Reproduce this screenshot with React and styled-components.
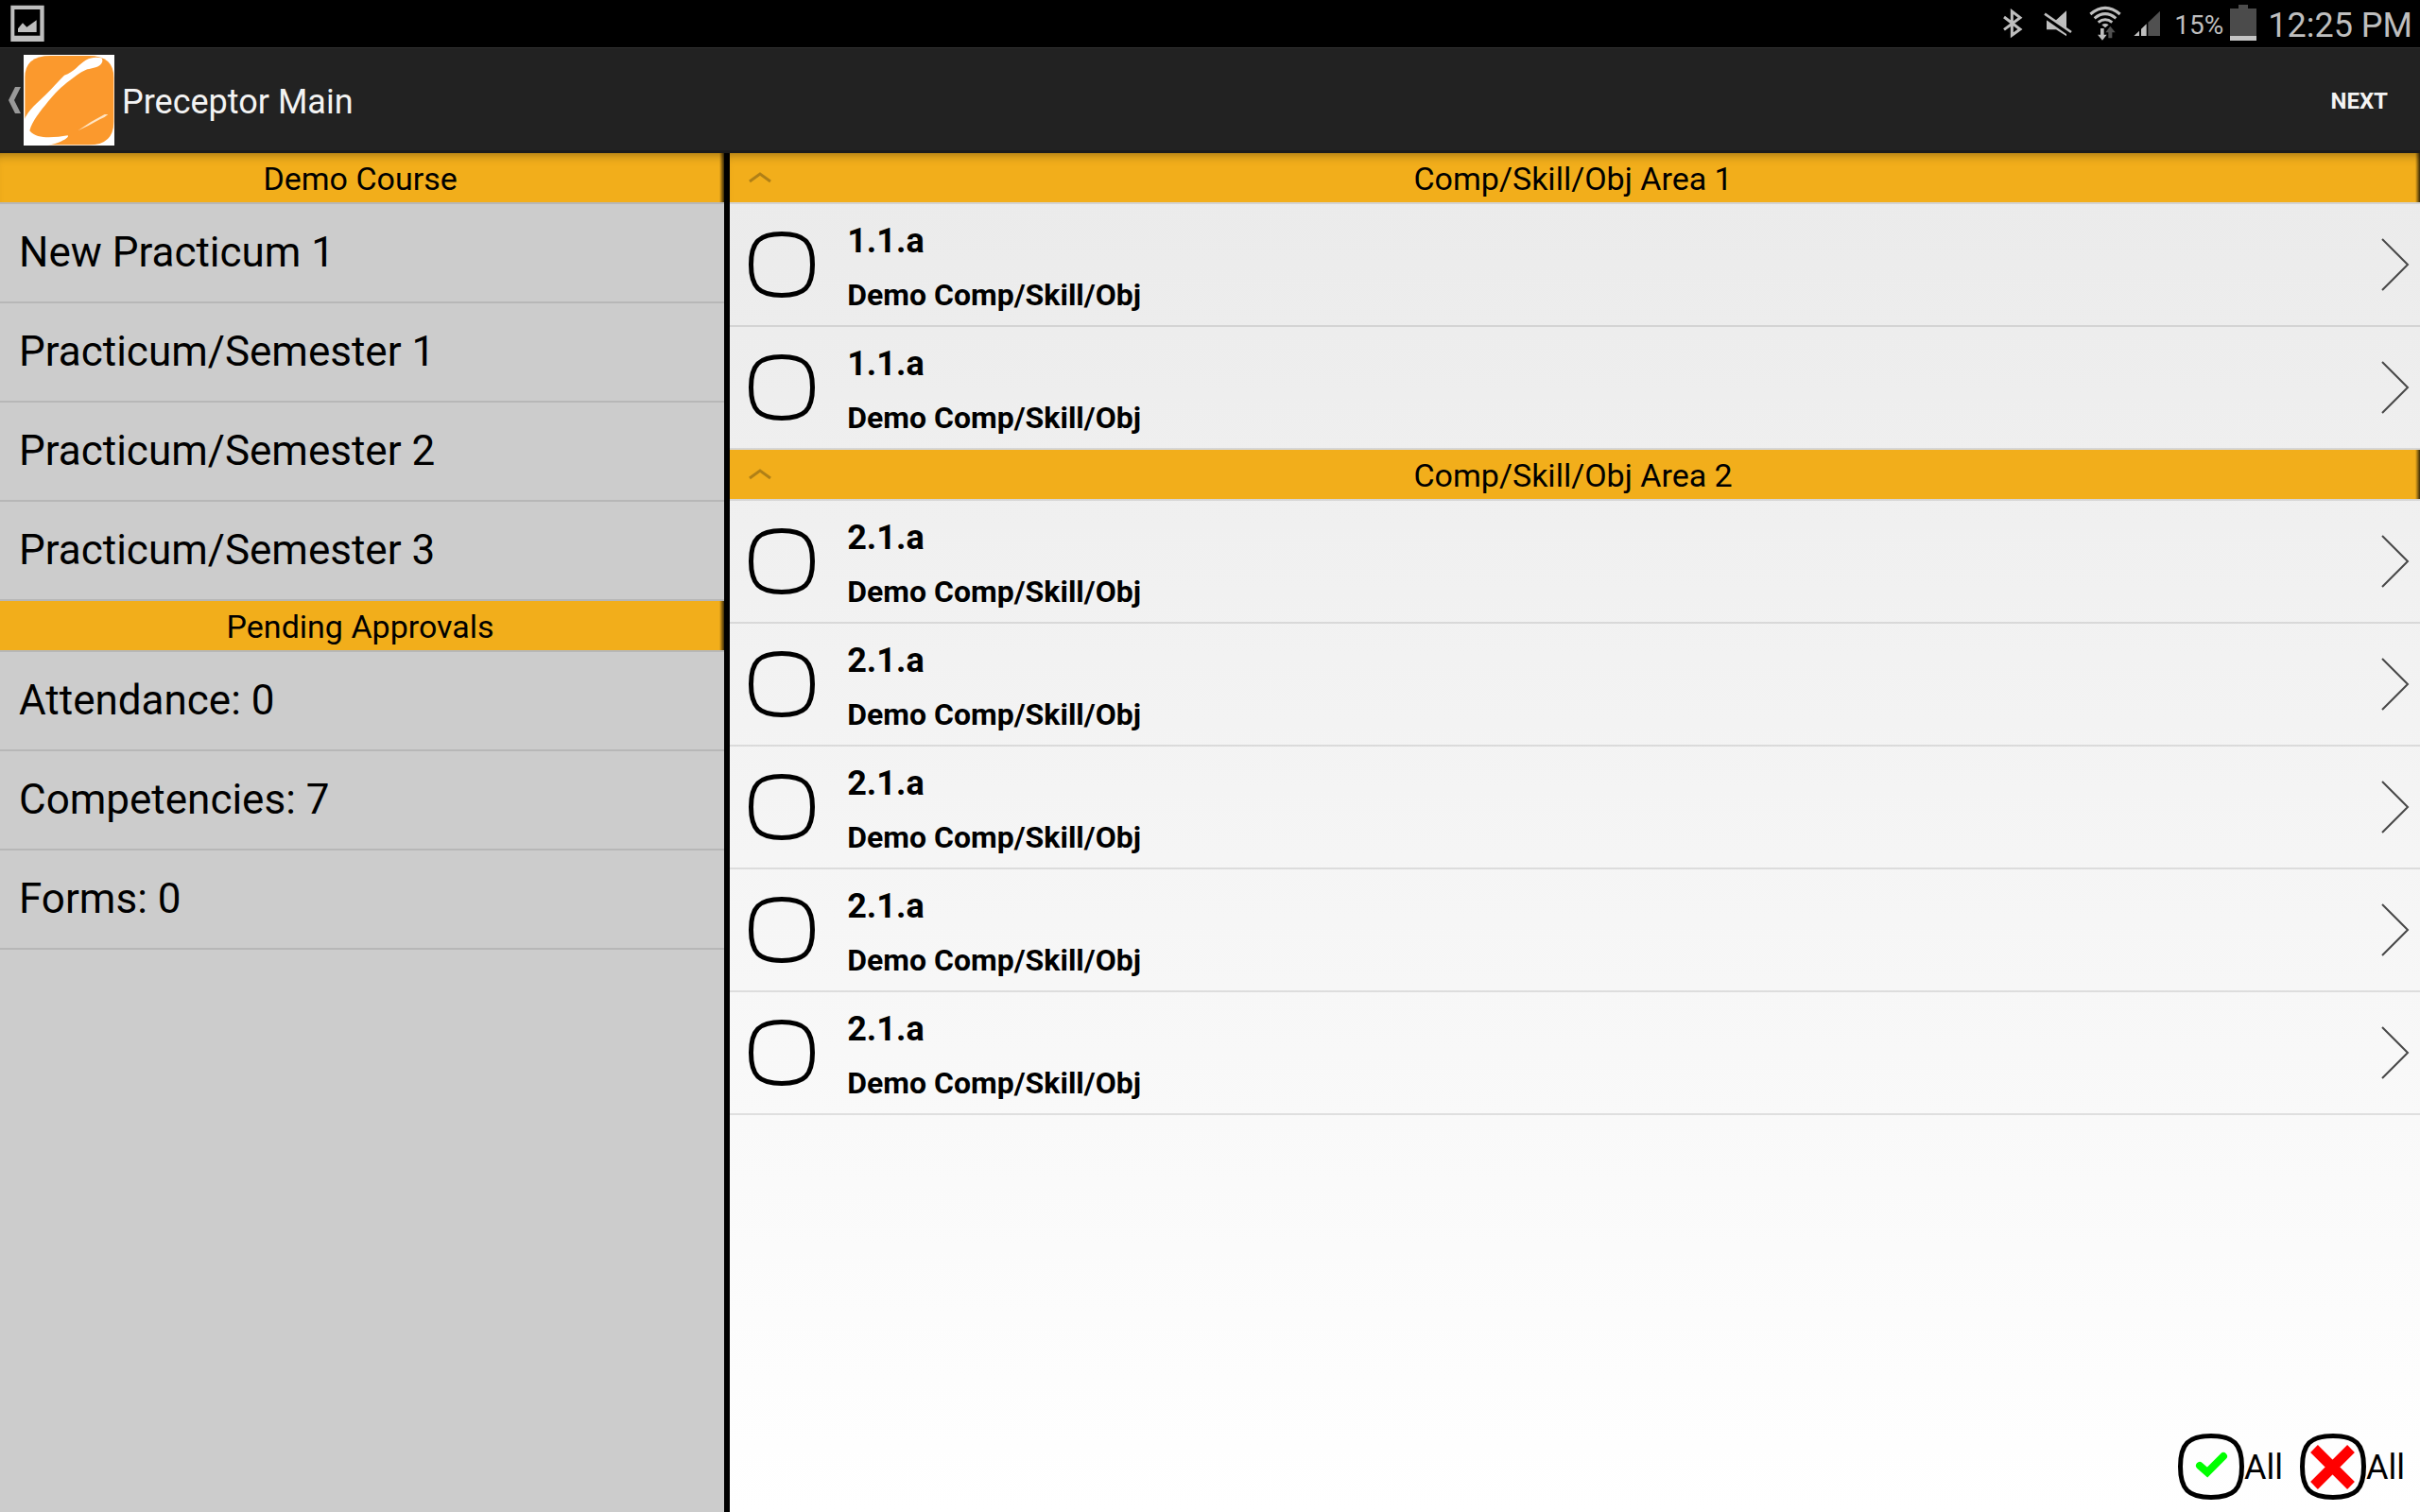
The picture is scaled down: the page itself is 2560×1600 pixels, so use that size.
import React, { useState } from "react";
import styled, { createGlobalStyle } from "styled-components";

const GlobalStyle = createGlobalStyle`
  *, *::before, *::after { box-sizing: border-box; }
  body {
    margin: 0;
    background: #fff;
    color: #000;
    font-family: Roboto, "Noto Sans", sans-serif;
  }
  button {
    margin: 0;
    padding: 0;
    border: 0;
    background: none;
    color: inherit;
    font: inherit;
    text-align: left;
    cursor: pointer;
  }
  ul { margin: 0; padding: 0; list-style: none; }
  h1, h2, h3, p { margin: 0; font: inherit; }
  svg { display: block; flex: none; }
`;

const Screen = styled.div`
  min-height: 100vh;
  display: flex;
  flex-direction: column;
  background: linear-gradient(#e8e8e8, #fff);
`;

const StatusBar = styled.div`
  height: 50px;
  padding: 0 8px 0 11px;
  display: flex;
  align-items: center;
  background: #000;
  color: #bebebe;
`;

const StatusIcons = styled.div`
  margin-left: auto;
  display: flex;
  align-items: center;
`;

const Percent = styled.span`
  margin: 0 7px 0 3px;
  font-size: 28px;
  line-height: 50px;
  padding-top: 3px;
`;

const Clock = styled.time`
  margin-left: 12px;
  font-size: 36px;
  line-height: 50px;
  padding-top: 3px;
`;

const ActionBar = styled.header`
  height: 112px;
  padding: 2px 34px 0 8px;
  display: flex;
  align-items: center;
  background: #222;
  color: #f3f3f3;
  border-top: 1px solid #303030;
  border-bottom: 3px solid #1b1b1b;
`;

const HomeButton = styled.button`
  display: flex;
  align-items: center;
  gap: 3px;
`;

const Title = styled.h1`
  margin-left: 8px;
  padding-top: 4px;
  font-size: 36px;
  line-height: 48px;
`;

const NextButton = styled.button`
  margin-left: auto;
  padding-top: 2px;
  font-size: 24px;
  font-weight: 700;
  line-height: 48px;
`;

const Panes = styled.div`
  flex: 1;
  display: flex;
`;

const Sidebar = styled.nav`
  flex: 3 1 0;
  min-width: 0;
  background: #ccc;
`;

const Divider = styled.div`
  flex: none;
  width: 6px;
  background: #000;
`;

const Main = styled.main`
  flex: 7 1 0;
  min-width: 0;
  display: flex;
  flex-direction: column;
`;

const SectionBar = styled.h2`
  width: 100%;
  height: 54px;
  padding: 2px 4px 0 0;
  display: grid;
  align-items: center;
  justify-items: center;
  background:
    linear-gradient(to left, rgba(0, 0, 0, 0.75), rgba(0, 0, 0, 0) 5px),
    #f2ae1b;
  background-clip: padding-box;
  border-bottom: 2px solid rgba(0, 0, 0, 0.1);
  box-shadow: ${(p) => (p.$first ? "inset 0 10px 12px -9px rgba(0, 0, 0, 0.4)" : "none")};
  font-size: 34px;
  line-height: 50px;
`;

const CollapseButton = styled.button`
  width: 100%;
  padding-left: 20px;
  display: grid;
  align-items: center;

  > * { grid-area: 1 / 1; }
  > span { margin-left: -20px; text-align: center; }
`;

const NavItem = styled.button`
  display: block;
  width: 100%;
  padding: 0 20px;
  border-bottom: 2px solid rgba(0, 0, 0, 0.1);
  font-size: 44px;
  line-height: 103px;
`;

const SkillRow = styled.li`
  display: flex;
  align-items: center;
  height: 130px;
  padding: 0 11px 0 20px;
  border-bottom: 2px solid rgba(0, 0, 0, 0.1);
`;

const BoxLabel = styled.label`
  position: relative;
  display: block;
  cursor: pointer;

  input {
    position: absolute;
    inset: 0;
    width: 70px;
    height: 70px;
    margin: 0;
    opacity: 0;
    cursor: pointer;
  }
`;

const SkillButton = styled.button`
  flex: 1;
  margin-left: 34px;
  display: flex;
  align-items: center;
  justify-content: space-between;
`;

const SkillText = styled.span`
  display: flex;
  flex-direction: column;
  padding: 11px 0 3px;
  font-weight: 700;
  line-height: 57px;
`;

const SkillCode = styled.span`
  font-size: 36px;
`;

const SkillName = styled.span`
  font-size: 32px;
`;

const BulkActions = styled.div`
  margin-top: auto;
  padding: 0 16px 13px 0;
  display: flex;
  justify-content: flex-end;
  gap: 18px;
`;

const BulkButton = styled.button`
  display: flex;
  align-items: center;
  font-size: 36px;
  line-height: 68px;

  span { padding-top: 2px; }
`;

const BoxShape = () => (
  <path
    d="M35 2.500C59 2.500 67.500 11 67.500 35S59 67.500 35 67.500 2.500 59 2.500 35 11 2.500 35 2.500Z"
    fill="none"
    stroke="#000"
    strokeWidth="5"
  />
);

function StatusGlyphs() {
  return (
    <>
      <svg width="48" height="50" viewBox="45 0 144 150" aria-label="Bluetooth">
        <path d="M90 54 141 93 115 112V36L141 56 90 94" fill="none" stroke="#bebebe" strokeWidth="9" />
      </svg>
      <svg width="48" height="50" viewBox="189 0 144 150" aria-label="Muted">
        <path d="M225 64h30L288 34v81L255 94h-30Z" fill="#bebebe" />
        <path d="M219 50 303 109" stroke="#000" strokeWidth="16" />
        <path d="M219 44 303 102" stroke="#bebebe" strokeWidth="8" />
      </svg>
      <svg width="48" height="50" viewBox="333 0 144 150" aria-label="Wi-Fi">
        <g fill="none" stroke="#bebebe" strokeWidth="9">
          <path d="M364 45Q411 5 458 45" />
          <path d="M377 58Q411 30 445 58" />
          <path d="M389 71Q411 54 433 71" />
        </g>
        <path d="M400 79Q411 71 422 79L411 88Z" fill="#bebebe" />
        <path d="M396 90h11v20h9l-14 18-15-18h9Z" fill="#bebebe" />
        <path d="M421 121h12v-18h10l-16-20-15 20h9Z" fill="#505050" />
      </svg>
      <svg width="48" height="50" viewBox="477 0 144 150" aria-label="Signal">
        <path d="M502 114 519 98v16ZM525 114V92l17-16v38Z" fill="#bebebe" />
        <path d="M547 114V71l38-36v79Z" fill="#505050" />
      </svg>
    </>
  );
}

const Battery = () => (
  <svg width="28" height="50" viewBox="807 0 84 150" aria-label="Battery">
    <path d="M807 27h27V15h30v12h27v87h-84Z" fill="#4b4b4b" />
    <path d="M807 114h84v15h-84Z" fill="#c4c4c4" />
  </svg>
);

const Picture = () => (
  <svg width="36" height="40" viewBox="33 15 108 120" aria-label="Screenshot saved">
    <path d="M34 17h106v115H34ZM46 30v83h81V30Z" fill="#bebebe" fillRule="evenodd" />
    <path d="M57 102V91l15-18 13 13 31-22v38Z" fill="#bebebe" />
  </svg>
);

const Logo = () => (
  <svg width="96" height="96" viewBox="75 174 288 288" aria-hidden="true">
    <path d="M75 174h288v288H75Z" fill="#fff" />
    <path
      d="M160 177H282Q361 177 361 246V386Q361 460 282 460H160Q79 460 79 386V246Q79 177 160 177Z"
      fill="#fb992d"
    />
    <path
      d="M75 384C92 346 117 329 145 301 167 279 184 259 204 239 236 228 251 203 272 191 290 181 306 181 322 184 329 194 323 203 316 208 304 217 286 217 272 222 253 230 238 243 222 255 194 276 174 296 153 322 126 356 103 383 94 415 108 432 131 436 155 436 177 436 195 433 215 430 220 436 205 443 196 448 183 455 168 458 150 462H75Z"
      fill="#fff"
    />
    <path d="M247 415Q288 385 332 363H343Q333 373 317 379 281 400 247 415Z" fill="#ffe5c4" />
  </svg>
);

const BackArrow = () => (
  <svg width="14" height="28" viewBox="0 0 14 28" aria-hidden="true">
    <path d="M8 0h6L7 14l7 14H8L1 14Z" fill="#999" />
  </svg>
);

function Section({ title, first, children }) {
  const [open, setOpen] = useState(true);
  return (
    <section>
      <SectionBar $first={first}>
        <CollapseButton type="button" aria-expanded={open} onClick={() => setOpen(!open)}>
          <svg width="24" height="16" viewBox="0 0 24 16" aria-hidden="true">
            <path d="M1 11 12 3 23 11" fill="none" stroke="#b08017" strokeWidth="3" />
          </svg>
          <span>{title}</span>
        </CollapseButton>
      </SectionBar>
      {open && <ul>{children}</ul>}
    </section>
  );
}

function Skill({ code, name }) {
  const [checked, setChecked] = useState(false);
  return (
    <SkillRow>
      <BoxLabel>
        <input
          type="checkbox"
          aria-label={`${code} ${name}`}
          checked={checked}
          onChange={(e) => setChecked(e.target.checked)}
        />
        <svg width="70" height="70" viewBox="0 0 70 70" aria-hidden="true">
          <BoxShape />
          {checked && <path d="M23 34 31 41 48 24" fill="none" stroke="#0f0" strokeWidth="8" strokeLinecap="round" />}
        </svg>
      </BoxLabel>
      <SkillButton type="button">
        <SkillText>
          <SkillCode>{code}</SkillCode>
          <SkillName>{name}</SkillName>
        </SkillText>
        <svg width="30" height="58" viewBox="0 0 30 58" aria-hidden="true">
          <path d="M1 2 28 29 1 56" fill="none" stroke="#484848" strokeWidth="2" />
        </svg>
      </SkillButton>
    </SkillRow>
  );
}

const practicums = ["New Practicum 1", "Practicum/Semester 1", "Practicum/Semester 2", "Practicum/Semester 3"];
const pending = ["Attendance: 0", "Competencies: 7", "Forms: 0"];
const areas = [
  { title: "Comp/Skill/Obj Area 1", codes: ["1.1.a", "1.1.a"] },
  { title: "Comp/Skill/Obj Area 2", codes: ["2.1.a", "2.1.a", "2.1.a", "2.1.a", "2.1.a"] },
];

const NavList = ({ items }) => (
  <ul>
    {items.map((item) => (
      <li key={item}>
        <NavItem type="button">{item}</NavItem>
      </li>
    ))}
  </ul>
);

export default function App() {
  return (
    <Screen>
      <GlobalStyle />
      <StatusBar>
        <Picture />
        <StatusIcons>
          <StatusGlyphs />
          <Percent>15%</Percent>
          <Battery />
          <Clock>12:25 PM</Clock>
        </StatusIcons>
      </StatusBar>
      <ActionBar>
        <HomeButton type="button" aria-label="Navigate up">
          <BackArrow />
          <Logo />
        </HomeButton>
        <Title>Preceptor Main</Title>
        <NextButton type="button">NEXT</NextButton>
      </ActionBar>
      <Panes>
        <Sidebar>
          <SectionBar $first>Demo Course</SectionBar>
          <NavList items={practicums} />
          <SectionBar>Pending Approvals</SectionBar>
          <NavList items={pending} />
        </Sidebar>
        <Divider />
        <Main>
          {areas.map((area, i) => (
            <Section key={area.title} title={area.title} first={i === 0}>
              {area.codes.map((code, n) => (
                <Skill key={n} code={code} name="Demo Comp/Skill/Obj" />
              ))}
            </Section>
          ))}
          <BulkActions>
            <BulkButton type="button">
              <svg width="70" height="70" viewBox="0 0 70 70" aria-hidden="true">
                <BoxShape />
                <path d="M23 34 31 41 48 24" fill="none" stroke="#0f0" strokeWidth="8" strokeLinecap="round" />
              </svg>
              <span>All</span>
            </BulkButton>
            <BulkButton type="button">
              <svg width="70" height="70" viewBox="0 0 70 70" aria-hidden="true">
                <BoxShape />
                <path d="M15 16 54 55M54 16 15 55" fill="none" stroke="#f00" strokeWidth="11" />
              </svg>
              <span>All</span>
            </BulkButton>
          </BulkActions>
        </Main>
      </Panes>
    </Screen>
  );
}
